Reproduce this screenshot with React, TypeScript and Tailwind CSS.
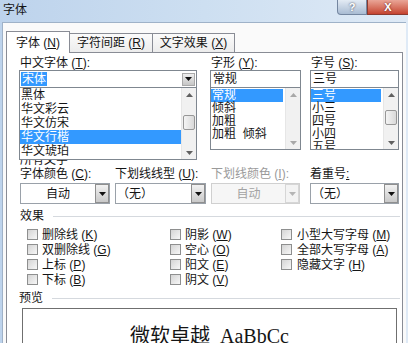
import React from 'react';

const Key = ({ k }: { k: string }) => (
  <span>
    (<span className="underline">{k}</span>)
  </span>
);

const Tri = ({ up, color = '#111' }: { up?: boolean; color?: string }) => (
  <svg width="7" height="4" viewBox="0 0 7 4">
    <path d={up ? 'M0 4 L3.5 0 L7 4 Z' : 'M0 0 L7 0 L3.5 4 Z'} fill={color} />
  </svg>
);

const ScrollBar = ({ thumb, dim }: { thumb?: number; dim?: boolean }) => (
  <div className="w-[15px] h-full bg-[#f1f1f1] border-l border-[#e6e6e6] flex flex-col items-center pt-[5px] pb-[4px] shrink-0">
    <Tri up color={dim ? '#a8a8a8' : '#606060'} />
    {thumb !== undefined && (
      <div
        className="w-[12px] h-[15px] rounded-[2px] border border-[#979797] bg-gradient-to-r from-[#f4f4f4] to-[#d9d9d9]"
        style={{ marginTop: thumb }}
      />
    )}
    <div className="flex-1" />
    <Tri color={dim ? '#a8a8a8' : '#606060'} />
  </div>
);

const DropBtn = ({ disabled }: { disabled?: boolean }) => (
  <div
    className={`w-[14px] h-[19px] flex items-center justify-center border ${
      disabled
        ? 'border-[#d6d6d6] bg-[#f3f3f3]'
        : 'border-[#8f8f8f] bg-gradient-to-b from-[#f2f2f2] to-[#c9c9c9]'
    }`}
  >
    <Tri color={disabled ? '#b5b5b5' : '#111'} />
  </div>
);

const Combo = ({ text, center, disabled }: { text: string; center?: boolean; disabled?: boolean }) => (
  <div
    className={`h-[21px] flex items-center border ${
      disabled ? 'border-[#d0d0d0] bg-[#f6f6f6] text-[#a3a3a3]' : 'border-[#9aa1a9] bg-white'
    }`}
  >
    <span className={`flex-1 ${center ? 'text-center' : 'pl-[1px]'}`}>{text}</span>
    <DropBtn disabled={disabled} />
  </div>
);

const Check = ({ label, k, gap = 'ml-[4px]' }: { label: string; k: string; gap?: string }) => (
  <div className="h-[15px] flex items-center">
    <span className="w-[11px] h-[11px] border border-[#8e8f8f] bg-gradient-to-br from-[#d4d4d4] to-[#f7f7f7] shrink-0" />
    <span className={gap}>
      {label} <Key k={k} />
    </span>
  </div>
);

const Item = ({ text, sel, h }: { text: string; sel?: boolean; h: string }) => (
  <div className={`${h} pl-[1px] whitespace-pre ${sel ? 'bg-[#3399ff] text-white' : ''}`}>{text}</div>
);

export default function App() {
  return (
    <div className="w-[408px] h-[343px] overflow-hidden bg-gradient-to-r from-[#bdd3ec] via-[#cddff1] to-[#dfeaf6] flex flex-col text-[12px] leading-[14px] text-[#151515] font-['Liberation_Sans','Noto_Sans_CJK_SC',sans-serif]">
      {/* title bar */}
      <div className="h-[22px] shrink-0 flex items-start">
        <span className="pl-[3px] pt-[4px] text-[12px] leading-[13px]">字体</span>
        <div className="ml-auto flex">
          <div className="w-[30px] h-[15px] rounded-bl-[4px] border border-t-0 border-[#7486a0] bg-gradient-to-b from-[#e3ebf4] to-[#a9bcd3] flex items-center justify-center text-[11px] leading-[11px] font-bold text-white [text-shadow:0_0_2px_#334]">
            ?
          </div>
          <div className="w-[41px] h-[15px] border border-t-0 border-r-0 border-[#8a3a30] bg-gradient-to-b from-[#e9a597] to-[#c4422f] flex items-center justify-center text-[11px] leading-[11px] font-bold text-white [text-shadow:0_0_2px_#511]">
            X
          </div>
        </div>
      </div>

      {/* body */}
      <div className="flex-1 ml-[2px] mr-[2px] bg-[#fafafa] border-l border-t border-[#9fb2c8] pl-[3px] pt-[8px] flex flex-col">
        {/* tabs */}
        <div className="h-[21px] flex items-end shrink-0">
          <div className="relative z-10 w-[64px] h-[22px] -mb-px bg-white border border-b-0 border-[#898c95] flex items-center justify-center">
            <span>
              字体 <Key k="N" />
            </span>
          </div>
          <div className="w-[83px] h-[19px] bg-gradient-to-b from-[#fbfbfb] to-[#ececec] border border-l-0 border-b-0 border-[#898c95] flex items-center justify-center">
            <span>
              字符间距 <Key k="R" />
            </span>
          </div>
          <div className="w-[82px] h-[19px] bg-gradient-to-b from-[#fbfbfb] to-[#ececec] border border-l-0 border-b-0 border-[#898c95] flex items-center justify-center">
            <span>
              文字效果 <Key k="X" />
            </span>
          </div>
        </div>

        {/* panel */}
        <div className="w-[397px] flex-1 bg-white border border-[#898c95] flex flex-col">
          {/* fonts row */}
          <div className="relative z-10 flex items-start pl-[12px] pt-[3px]">
            <div className="w-[178px]">
              <div className="h-[14px] pl-[1px]">
                中文字体 <Key k="T" />:
              </div>
              <div className="h-[18px] border border-[#7f8790] flex items-center">
                <span className="ml-[1px] px-[1px] bg-[#3399ff] text-white">宋体</span>
                <div className="ml-auto mr-[1px] w-[13px] h-[13px] border border-[#a9a9a9] bg-gradient-to-b from-[#eeeeee] to-[#c6c6c6] flex items-center justify-center">
                  <Tri />
                </div>
              </div>
              <div className="h-[72px] border border-t-0 border-[#7f8790] bg-white flex">
                <div className="flex-1">
                  <Item h="h-[14px]" text="黑体" />
                  <Item h="h-[14px]" text="华文彩云" />
                  <Item h="h-[14px]" text="华文仿宋" />
                  <Item h="h-[14px]" text="华文行楷" sel />
                  <Item h="h-[14px]" text="华文琥珀" />
                </div>
                <ScrollBar thumb={18} />
              </div>
            </div>

            <div className="ml-[13px] w-[91px]">
              <div className="h-[14px] pl-[1px]">
                字形 <Key k="Y" />:
              </div>
              <div className="h-[18px] border border-[#7f8790] flex items-center pl-[2px]">常规</div>
              <div className="h-[62px] border border-t-0 border-[#7f8790] bg-white flex overflow-hidden">
                <div className="flex-1 pt-[1px] pr-[2px]">
                  <Item h="h-[13px] leading-[13px]" text="常规" sel />
                  <Item h="h-[13px] leading-[13px]" text="倾斜" />
                  <Item h="h-[13px] leading-[13px]" text="加粗" />
                  <Item h="h-[13px] leading-[13px]" text="加粗  倾斜" />
                </div>
                <ScrollBar dim />
              </div>
            </div>

            <div className="ml-[9px] w-[89px]">
              <div className="h-[14px] pl-[1px]">
                字号 <Key k="S" />:
              </div>
              <div className="h-[18px] border border-[#7f8790] flex items-center pl-[2px]">三号</div>
              <div className="h-[62px] border border-t-0 border-[#7f8790] bg-white flex overflow-hidden">
                <div className="flex-1 pt-[1px] pr-[2px]">
                  <Item h="h-[13px] leading-[13px]" text="三号" sel />
                  <Item h="h-[13px] leading-[13px]" text="小三" />
                  <Item h="h-[13px] leading-[13px]" text="四号" />
                  <Item h="h-[13px] leading-[13px]" text="小四" />
                  <Item h="h-[13px] leading-[13px]" text="五号" />
                </div>
                <ScrollBar thumb={13} />
              </div>
            </div>
          </div>

          <div className="-mt-[7px] h-[14px] pl-[13px]">所有文字</div>

          {/* colour / underline row */}
          <div className="flex pl-[13px]">
            <div className="w-[90px]">
              <div className="h-[14px]">
                字体颜色 <Key k="C" />:
              </div>
              <div className="mt-[2px]">
                <Combo text="自动" center />
              </div>
            </div>
            <div className="ml-[5px] w-[91px]">
              <div className="h-[14px]">
                下划线线型 <Key k="U" />:
              </div>
              <div className="mt-[2px]">
                <Combo text="（无）" />
              </div>
            </div>
            <div className="ml-[5px] w-[89px]">
              <div className="h-[14px] text-[#9a9a9a]">
                下划线颜色 <Key k="I" />:
              </div>
              <div className="mt-[2px]">
                <Combo text="自动" center disabled />
              </div>
            </div>
            <div className="ml-[10px] w-[89px]">
              <div className="h-[14px]">
                着重号<span className="underline">:</span>
              </div>
              <div className="mt-[2px]">
                <Combo text="（无）" />
              </div>
            </div>
          </div>

          {/* effects */}
          <div className="mt-[5px] h-[14px] flex items-center pl-[13px] pr-[2px]">
            <span>效果</span>
            <div className="ml-[9px] flex-1 h-px bg-[#d5d9de]" />
          </div>
          <div className="mt-[4px] flex pl-[20px]">
            <div className="w-[143px]">
              <Check label="删除线" k="K" />
              <Check label="双删除线" k="G" />
              <Check label="上标" k="P" />
              <Check label="下标" k="B" />
            </div>
            <div className="w-[111px]">
              <Check label="阴影" k="W" />
              <Check label="空心" k="O" />
              <Check label="阳文" k="E" />
              <Check label="阴文" k="V" />
            </div>
            <div>
              <Check label="小型大写字母" k="M" gap="ml-[5px]" />
              <Check label="全部大写字母" k="A" gap="ml-[5px]" />
              <Check label="隐藏文字" k="H" gap="ml-[5px]" />
            </div>
          </div>

          {/* preview */}
          <div className="mt-[4px] h-[14px] flex items-center pl-[12px] pr-[2px]">
            <span>预览</span>
            <div className="ml-[9px] flex-1 h-px bg-[#d5d9de]" />
          </div>
          <div className="mt-[3px] ml-[15px] w-[375px] h-[60px] border border-[#6f6f6f] pt-[16px] text-center text-[20px] leading-[23px] font-['Liberation_Serif','Noto_Sans_CJK_SC',serif]">
            微软卓越&nbsp; AaBbCc
          </div>
        </div>
      </div>
    </div>
  );
}
